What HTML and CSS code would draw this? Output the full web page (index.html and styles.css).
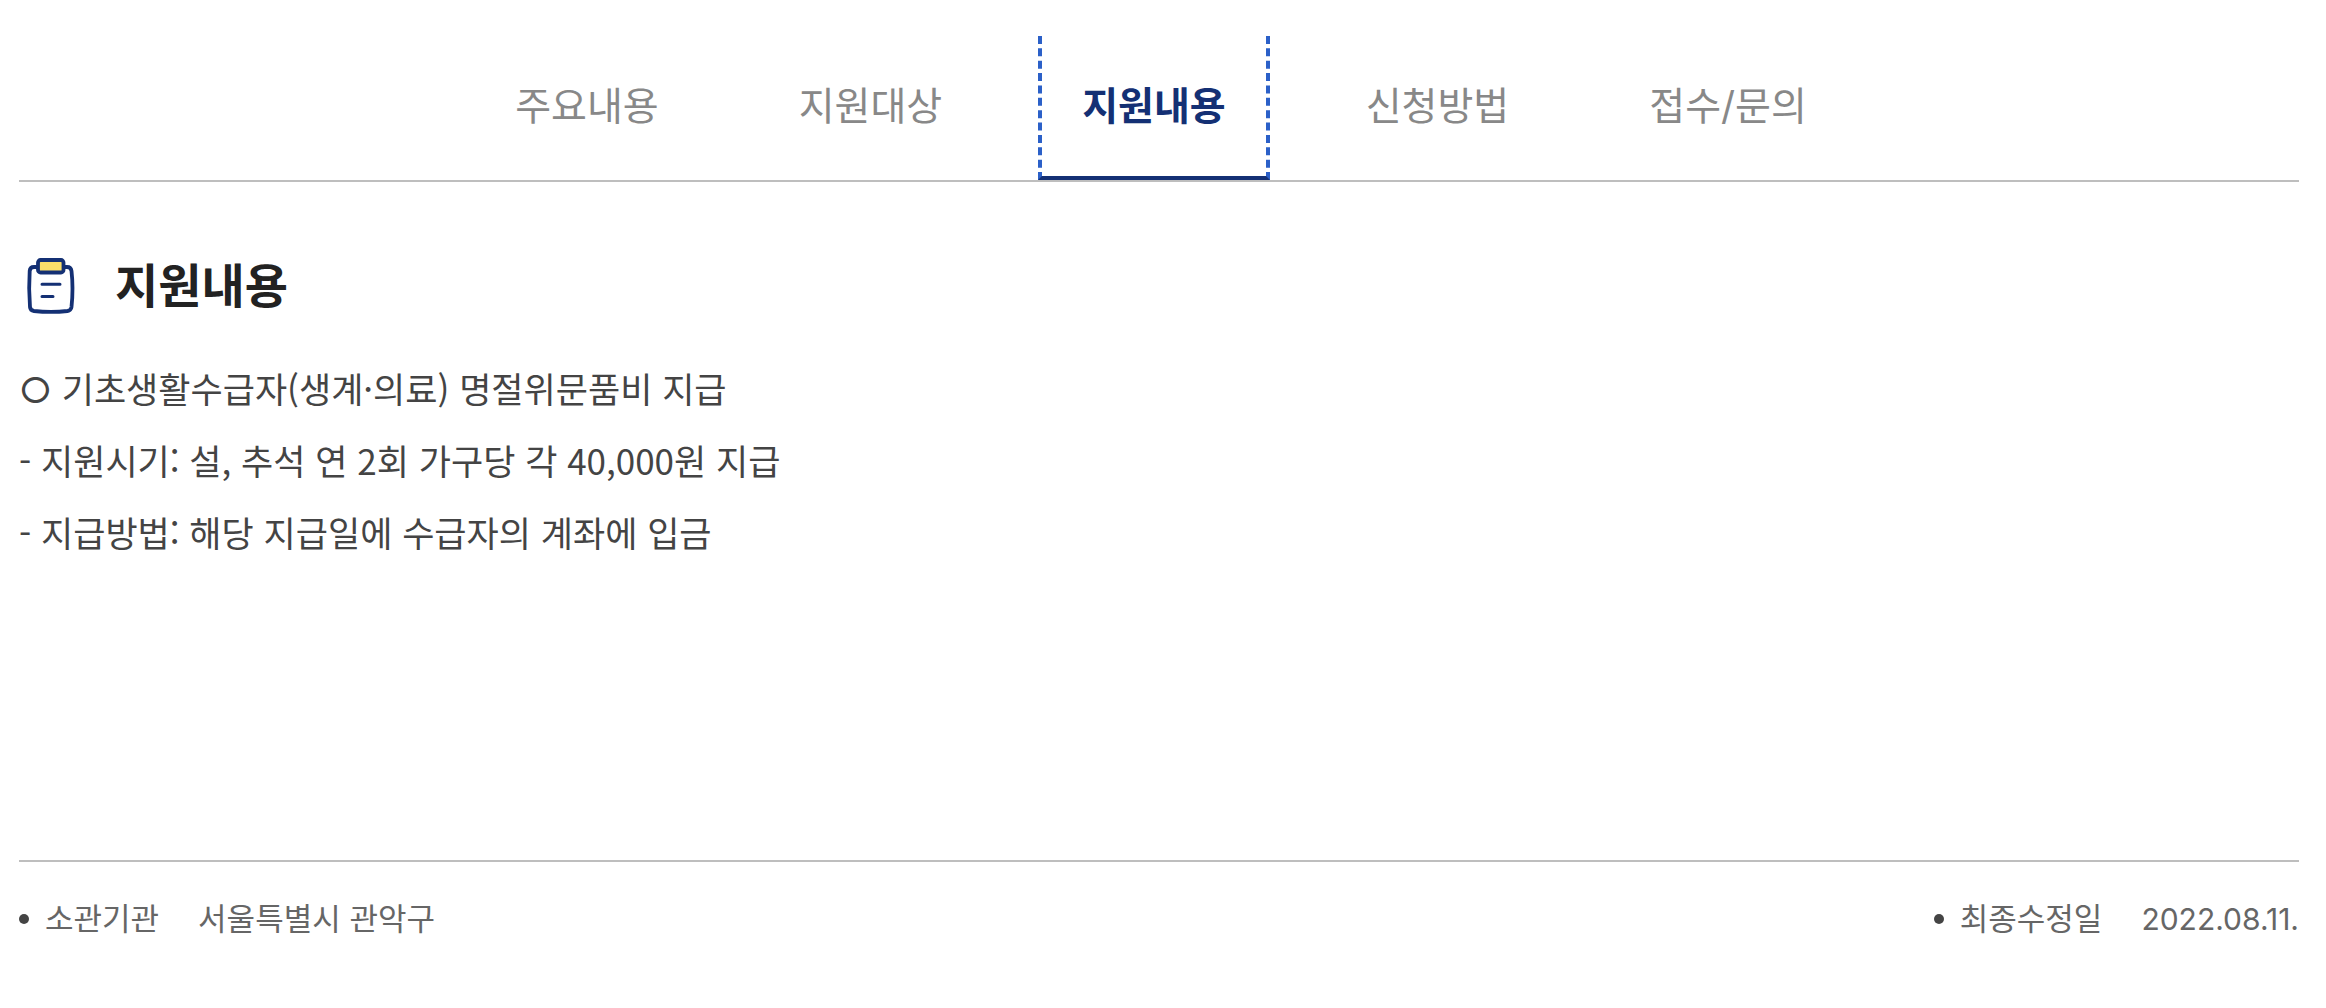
FILE: index.html
```html
<!DOCTYPE html>
<html lang="ko">
<head>
<meta charset="utf-8">
<meta name="viewport" content="width=device-width, initial-scale=1">
<title>지원내용</title>
<link rel="stylesheet" href="styles.css">
</head>
<body>
<nav class="tabs">
<a class="tab" href="#summary">주요내용</a>
<a class="tab" href="#target">지원대상</a>
<a class="tab tab-active" href="#content" aria-current="page">지원내용</a>
<a class="tab" href="#apply">신청방법</a>
<a class="tab" href="#contact">접수/문의</a>
</nav>
<main class="content" id="content">
<h1 class="title">
<svg class="title-icon" viewBox="0 0 64 64" fill="none" stroke="#143074" stroke-width="3.8" stroke-linecap="round" stroke-linejoin="round" aria-hidden="true">
<path d="M18.500 13H15Q11 13 10.700 17Q9.500 34 11 53Q11.300 56.500 15 57Q32 58.800 48.500 57Q52 56.500 52.500 53Q54.500 34 52.500 17Q52 13 48 13H44.500"/>
<rect x="19" y="6" width="25.500" height="12.500" rx="2.500" fill="#fade6a"/>
<path d="M23 30.300H41M23 42.500H34" stroke-width="3"/>
</svg>
<span>지원내용</span>
</h1>
<p class="line"><span class="marker">○</span> 기초생활수급자(생계·의료) 명절위문품비 지급</p>
<p class="line">- 지원시기: 설, 추석 연 2회 가구당 각 40,000원 지급</p>
<p class="line">- 지급방법: 해당 지급일에 수급자의 계좌에 입금</p>
</main>
<footer class="footer">
<dl class="meta"><dt>소관기관</dt><dd>서울특별시 관악구</dd></dl>
<dl class="meta"><dt>최종수정일</dt><dd><time class="date" datetime="2022-08-11">2022.08.11.</time></dd></dl>
</footer>
</body>
</html>
```

FILE: styles.css
```css
* { box-sizing: border-box; }
body { margin: 0; padding: 36px 27px 0 19px; background: #fff; color: #444; font-family: Inter, "Noto Sans CJK KR", sans-serif; }
.tabs { display: flex; justify-content: center; gap: 52px; padding-left: 4px; border-bottom: 2px solid #bebebe; }
.tab { height: 144px; padding: 0 44px; color: #888; font-size: 39px; line-height: 140px; text-decoration: none; }
.tab-active { padding: 0 40px; border: 4px dashed #2b60c8; border-top: 0; border-bottom: 4px solid #143074; color: #143074; font-weight: 700; }
.content { min-height: 678px; padding-top: 72px; }
.title { display: flex; align-items: center; gap: 32px; margin: 0 0 34px; height: 64px; color: #222; font-size: 47px; line-height: 64px; }
.title-icon { width: 64px; height: 64px; }
.line { margin: 0; font-family: "Noto Sans CJK KR", sans-serif; font-size: 35px; line-height: 72px; }
.marker { font-family: Inter, sans-serif; font-size: 36px; line-height: 1; }
.footer { display: flex; justify-content: space-between; padding-top: 33px; border-top: 2px solid #bebebe; color: #666; font-size: 31px; line-height: 48px; }
.meta { display: flex; align-items: center; margin: 0; }
.meta::before { content: ""; width: 10px; height: 10px; margin-right: 16px; border-radius: 50%; background: #444; }
.meta dd { margin: 0 0 0 39px; }
.date { font-size: 30px; }
```
